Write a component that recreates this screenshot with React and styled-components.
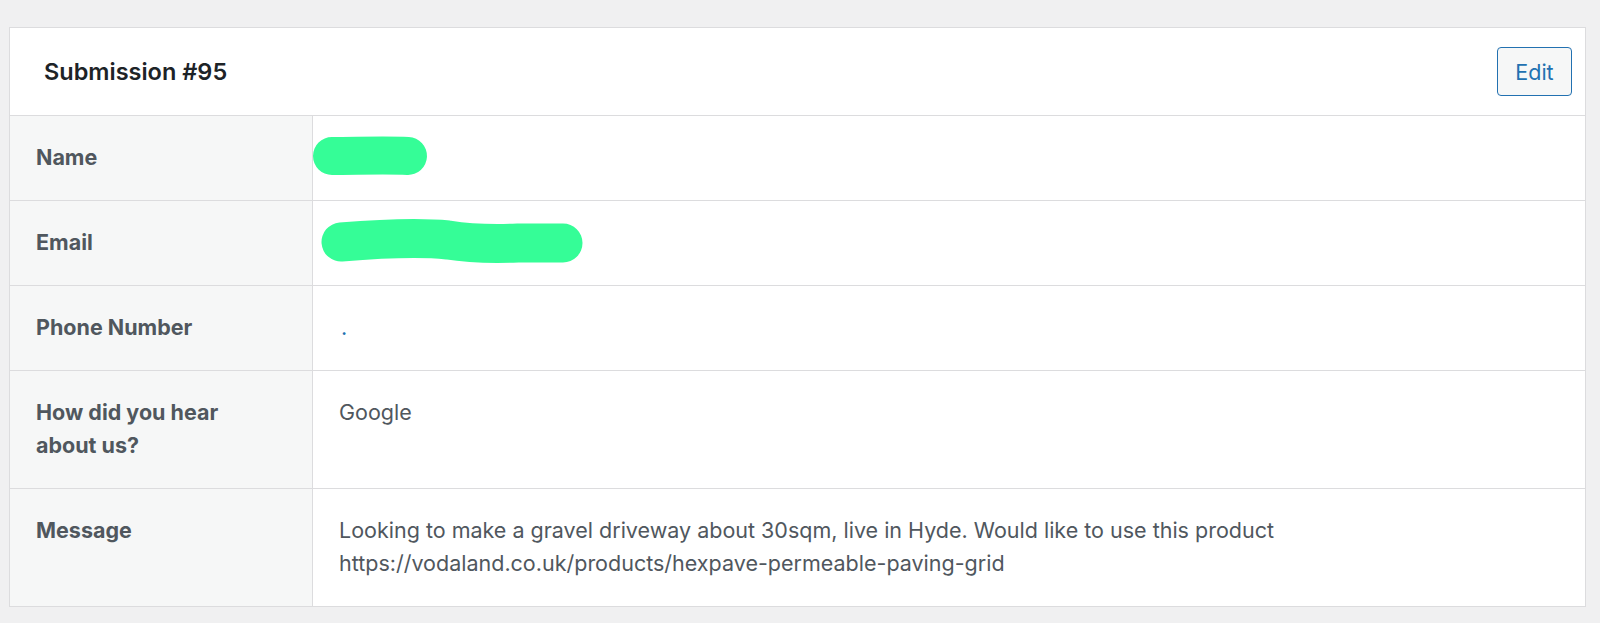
import React from "react";
import styled, { createGlobalStyle } from "styled-components";

const GlobalStyle = createGlobalStyle`
  html, body {
    margin: 0;
    background: #f0f0f1;
    font-family: Inter, "Noto Sans", "Liberation Sans", sans-serif;
    color: #50575e;
  }
`;

const Page = styled.div`
  padding: 27px 14px 0 9px;
`;

const Card = styled.div`
  background: #fff;
  border: 1px solid #dcdcde;
`;

const Header = styled.div`
  display: flex;
  align-items: center;
  justify-content: space-between;
  height: 87px;
  padding: 0 13px 0 34px;
  border-bottom: 1px solid #dcdcde;
`;

const Title = styled.h2`
  margin: 0;
  font-size: 23.5px;
  font-weight: 600;
  color: #1d2327;
`;

const EditButton = styled.button`
  width: 75px;
  height: 49px;
  padding: 0;
  border: 1.5px solid #2271b1;
  border-radius: 4px;
  background: #f6f7f7;
  color: #2271b1;
  font-family: inherit;
  font-size: 21.5px;
  cursor: pointer;
`;

const Table = styled.div`
  display: grid;
  grid-template-columns: 303px 1fr;
`;

const Label = styled.div`
  background: #f6f7f7;
  border-right: 1px solid #dcdcde;
  border-bottom: ${(p) => (p.last ? "none" : "1px solid #dcdcde")};
  padding: 25px 26px 26px;
  font-size: 21.5px;
  font-weight: 700;
  line-height: 33px;
  color: #50575e;
`;

const Value = styled.div`
  border-bottom: ${(p) => (p.last ? "none" : "1px solid #dcdcde")};
  padding: 25px 26px 26px;
  font-size: 21.5px;
  line-height: 33px;
  color: #50575e;
  position: relative;
`;

const PhoneLink = styled.a`
  color: #2271b1;
  text-decoration: none;
  padding-left: 2px;
`;

// green marker strokes hiding the personal details
const Scribble = styled.svg`
  position: absolute;
  display: block;
`;

const rows = [
  {
    label: "Name",
    value: (
      <Scribble
        width="120"
        height="44"
        style={{ left: -2, top: 18 }}
        viewBox="0 0 120 44"
      >
        <path
          d="M21 22 C 45 22, 75 21, 97 22"
          stroke="#35fd97"
          strokeWidth="38"
          strokeLinecap="round"
          fill="none"
        />
      </Scribble>
    ),
  },
  {
    label: "Email",
    value: (
      <Scribble
        width="270"
        height="50"
        style={{ left: 5, top: 17 }}
        viewBox="0 0 270 50"
      >
        <path
          d="M23 24 C 60 21, 100 19, 130 22 C 155 26, 175 26, 200 25 L 245 25"
          stroke="#35fd97"
          strokeWidth="39"
          strokeLinecap="round"
          fill="none"
        />
      </Scribble>
    ),
  },
  { label: "Phone Number", value: <PhoneLink href="#">.</PhoneLink> },
  { label: "How did you hear about us?", value: "Google" },
  {
    label: "Message",
    value: (
      <>
        Looking to make a gravel driveway about 30sqm, live in Hyde. Would like
        to use this product
        <br />
        https://vodaland.co.uk/products/hexpave-permeable-paving-grid
      </>
    ),
  },
];

export default function App() {
  return (
    <>
      <GlobalStyle />
      <Page>
        <Card>
          <Header>
            <Title>Submission #95</Title>
            <EditButton>Edit</EditButton>
          </Header>
          <Table>
            {rows.map((r, i) => (
              <React.Fragment key={r.label}>
                <Label last={i === rows.length - 1}>
                  {r.label === "How did you hear about us?" ? (
                    <>
                      How did you hear
                      <br />
                      about us?
                    </>
                  ) : (
                    r.label
                  )}
                </Label>
                <Value last={i === rows.length - 1}>{r.value}</Value>
              </React.Fragment>
            ))}
          </Table>
        </Card>
      </Page>
    </>
  );
}
